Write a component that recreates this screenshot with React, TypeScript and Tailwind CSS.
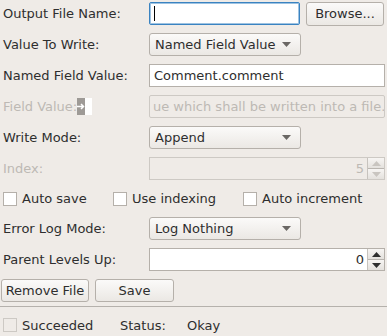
import React from "react";

const FONT = { fontFamily: '"DejaVu Sans", "Liberation Sans", sans-serif' };

function Combo({ value }: { value: string }) {
  return (
    <div className="w-[152px] h-[23px] flex items-center justify-between pl-[5px] pr-[9px] border border-[#b5b0aa] rounded-[3px] bg-gradient-to-b from-[#fbfaf9] to-[#ebe8e4] text-[#2e2e2e]">
      <span>{value}</span>
      <svg width="9" height="5" viewBox="0 0 9 5">
        <path d="M0 0h9L4.5 5z" fill="#6a6764" />
      </svg>
    </div>
  );
}

function Spin({ value, disabled }: { value: string; disabled?: boolean }) {
  const arrow = disabled ? "#c9c5c0" : "#2e2e2e";
  return (
    <div className={`flex-1 h-[23px] flex items-center border ${disabled ? "border-[#cdc9c4] bg-[#efebe7]" : "border-[#b5b0aa] bg-white"}`}>
      <span className={`flex-1 text-right pr-[3px] ${disabled ? "text-[#bdb9b4]" : "text-[#2e2e2e]"}`}>{value}</span>
      <div className="w-[17px] h-full flex flex-col border-l border-[#c7c3be]">
        <div className="flex-1 flex items-center justify-center bg-gradient-to-b from-[#f7f5f3] to-[#e4e1dd] border-b border-[#b9b5b0]">
          <svg width="9" height="5" viewBox="0 0 9 5"><path d="M0 5h9L4.5 0z" fill={arrow} /></svg>
        </div>
        <div className="flex-1 flex items-center justify-center bg-gradient-to-b from-[#f7f5f3] to-[#e4e1dd]">
          <svg width="9" height="5" viewBox="0 0 9 5"><path d="M0 0h9L4.5 5z" fill={arrow} /></svg>
        </div>
      </div>
    </div>
  );
}

function Check({ label }: { label: string }) {
  return (
    <div className="flex items-center gap-[5px]">
      <div className="w-[14px] h-[14px] border border-[#b5b0aa] bg-white" />
      <span>{label}</span>
    </div>
  );
}

function Row({ label, disabled, children }: { label: React.ReactNode; disabled?: boolean; children: React.ReactNode }) {
  return (
    <div className="h-[23px] flex items-center">
      <div className={`w-[149px] pl-[3px] ${disabled ? "text-[#bdb9b4]" : "text-[#2e2e2e]"}`}>{label}</div>
      {children}
    </div>
  );
}

export default function App() {
  return (
    <div className="w-[387px] h-[336px] bg-[#efebe7] text-[13px] text-[#2e2e2e] overflow-hidden flex flex-col pt-[2px] pr-[2px] gap-[8px]" style={FONT}>
      <Row label="Output File Name:">
        <div className="w-[151px] h-[23px] border border-[#3a83c1] rounded-[2px] bg-white flex items-center pl-[4px] shadow-[inset_0_0_0_1px_#9ec3e2]">
          <div className="w-px h-[15px] bg-black" />
        </div>
        <div className="ml-[6px] w-[78px] h-[24px] flex items-center justify-center border border-[#b5b0aa] rounded-[3px] bg-gradient-to-b from-[#fbfaf9] to-[#ebe8e4]">
          Browse...
        </div>
      </Row>
      <Row label="Value To Write:">
        <Combo value="Named Field Value" />
      </Row>
      <Row label="Named Field Value:">
        <div className="flex-1 h-[23px] border border-[#b5b0aa] bg-white flex items-center pl-[4px]">Comment.comment</div>
      </Row>
      <Row
        disabled
        label={
          <span className="flex items-center">
            Field Value:
            <span className="w-[8px] h-[17px] bg-[#9e9a96] flex items-center justify-center">
              <svg width="8" height="7" viewBox="0 0 8 7"><path d="M0 3.5h6M4 1l2.5 2.5L4 6" stroke="white" strokeWidth="1.5" fill="none" /></svg>
            </span>
            <span className="w-[7px] h-[17px] bg-white" />
          </span>
        }
      >
        <div className="flex-1 h-[23px] border border-[#cdc9c4] rounded-[2px] flex items-center overflow-hidden whitespace-nowrap text-[#bdb9b4] pl-[3px]">
          ue which shall be written into a file.
        </div>
      </Row>
      <Row label="Write Mode:">
        <Combo value="Append" />
      </Row>
      <Row label="Index:" disabled>
        <Spin value="5" disabled />
      </Row>
      <div className="h-[22px] flex items-center pl-[3px]">
        <div className="w-[110px]"><Check label="Auto save" /></div>
        <div className="w-[130px]"><Check label="Use indexing" /></div>
        <Check label="Auto increment" />
      </div>
      <Row label="Error Log Mode:">
        <Combo value="Log Nothing" />
      </Row>
      <Row label="Parent Levels Up:">
        <Spin value="0" />
      </Row>
      <div className="h-[23px] flex items-center pl-[1px] gap-[6px]">
        <div className="w-[88px] h-[23px] flex items-center justify-center border border-[#b5b0aa] rounded-[3px] bg-gradient-to-b from-[#fbfaf9] to-[#ebe8e4]">Remove File</div>
        <div className="w-[79px] h-[23px] flex items-center justify-center border border-[#b5b0aa] rounded-[3px] bg-gradient-to-b from-[#fbfaf9] to-[#ebe8e4]">Save</div>
      </div>
      <div className="h-px bg-[#b5b1ac] -mt-[4px] mr-[-2px]" />
      <div className="h-[22px] flex items-center pl-[3px]">
        <div className="w-[117px] flex items-center gap-[5px]">
          <div className="w-[14px] h-[14px] border border-[#cdc9c4] bg-[#efebe7]" />
          <span>Succeeded</span>
        </div>
        <span className="w-[67px]">Status:</span>
        <span>Okay</span>
      </div>
    </div>
  );
}
